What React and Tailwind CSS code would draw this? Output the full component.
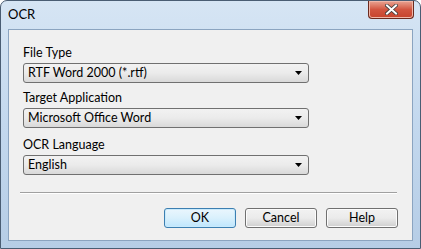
import React from 'react';

const font = { fontFamily: 'Lato, "Noto Sans", sans-serif' };

function Select({ value }) {
  return (
    <div className="flex h-[20px] w-[286px] items-center justify-between rounded-[3px] border border-[#707070] bg-gradient-to-b from-[#f2f2f2] via-[#ebebeb] to-[#d9d9d9] pl-[4px] pr-[6px] text-[12.5px] text-black">
      <span className="leading-none">{value}</span>
      <svg width="7" height="4" viewBox="0 0 7 4">
        <path d="M0 0H7L3.5 4Z" fill="#000" />
      </svg>
    </div>
  );
}

function Button({ label, primary }) {
  return (
    <div
      className={
        'flex h-[20px] w-[72px] items-center justify-center rounded-[3px] border text-[12.5px] text-black ' +
        (primary
          ? 'border-[#3c7fb1] bg-gradient-to-b from-[#eaf6fd] via-[#d9f0fc] to-[#bee6fd] shadow-[inset_0_0_0_1px_#c9eafc]'
          : 'border-[#707070] bg-gradient-to-b from-[#f2f2f2] via-[#ebebeb] to-[#cfcfcf] shadow-[inset_0_0_0_1px_#fcfcfc]')
      }
    >
      {label}
    </div>
  );
}

export default function App() {
  return (
    <div style={font} className="h-[249px] w-[421px] overflow-hidden bg-white">
      <div className="flex h-[249px] w-[421px] flex-col rounded-t-[7px] border border-[#4a5d73] bg-gradient-to-b from-[#d6e5f4] via-[#c3d8ee] to-[#b6cde6]">
        {/* title bar */}
        <div className="flex h-[28px] items-start justify-between">
          <span className="pl-[7px] pt-[5px] text-[13px] leading-[16px] text-black">OCR</span>
          <div className="mr-[6px] flex h-[18px] w-[46px] items-center justify-center rounded-b-[4px] border border-t-0 border-[#6b2a1e] bg-gradient-to-b from-[#e8a493] via-[#d25540] to-[#c6432c] shadow-[inset_0_0_0_1px_#f0b6a8]">
            <svg width="13" height="11" viewBox="0 0 13 11">
              <path d="M2 1.5L11 9.5M11 1.5L2 9.5" stroke="#3b3b3b" strokeWidth="3.6" strokeLinecap="square" />
              <path d="M2 1.5L11 9.5M11 1.5L2 9.5" stroke="#fff" strokeWidth="2" strokeLinecap="square" />
            </svg>
          </div>
        </div>
        {/* client */}
        <div className="mx-[7px] h-[212px] border border-[#8ba4c0] bg-[#f0f0f0]">
          <div className="flex flex-col pl-[14px] pt-[15px]">
            <span className="h-[16px] text-[12.5px] leading-[16px] text-black">File Type</span>
            <div className="mt-[2px]">
              <Select value="RTF Word 2000 (*.rtf)" />
            </div>
            <span className="mt-[7px] h-[16px] text-[12.5px] leading-[16px] text-black">Target Application</span>
            <div className="mt-[2px]">
              <Select value="Microsoft Office Word" />
            </div>
            <span className="mt-[9px] h-[16px] text-[12.5px] leading-[16px] text-black">OCR Language</span>
            <div className="mt-[2px]">
              <Select value="English" />
            </div>
          </div>
          <div className="ml-[11px] mr-[15px] mt-[17px] h-[2px] border-t border-b border-t-[#a0a0a0] border-b-white" />
          <div className="mr-[14px] mt-[14px] flex justify-end gap-[9px]">
            <Button label="OK" primary />
            <Button label="Cancel" />
            <Button label="Help" />
          </div>
        </div>
      </div>
    </div>
  );
}
